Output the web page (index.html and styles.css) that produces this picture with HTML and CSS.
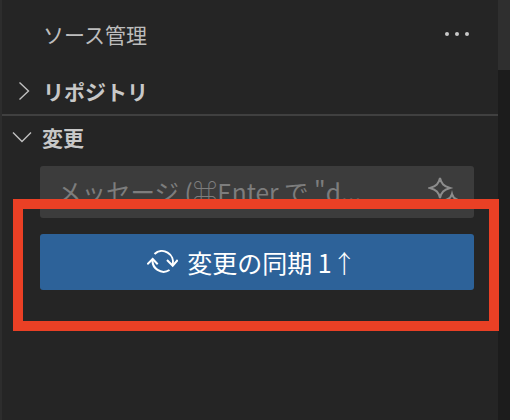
FILE: index.html
```html
<!DOCTYPE html>
<html lang="ja">
<head>
<meta charset="utf-8">
<title>ソース管理</title>
<link rel="stylesheet" href="styles.css">
</head>
<body>
<div class="app">
  <div class="edge"></div>
  <main class="panel">
    <header class="title-row">
      <span class="title">ソース管理</span>
      <svg class="more" width="26" height="6" viewBox="0 0 26 6"><circle cx="3" cy="3" r="2"/><circle cx="13" cy="3" r="2"/><circle cx="23" cy="3" r="2"/></svg>
    </header>
    <section class="section repos">
      <svg class="chev-right" width="12" height="20" viewBox="0 0 12 20"><path d="M1.500 1.500 L10.500 10 L1.500 18.500"/></svg>
      <span class="section-name">リポジトリ</span>
    </section>
    <section class="section changes">
      <svg class="chev-down" width="20" height="12" viewBox="0 0 20 12"><path d="M1 1.500 L10 10.500 L19 1.500"/></svg>
      <span class="section-name">変更</span>
    </section>
    <div class="commit">
      <div class="input">
        <span class="placeholder">メッセージ (⌘Enter で "d...</span>
        <svg class="sparkle" width="30" height="34" viewBox="0 0 30 34"><path d="M12 2 C13.500 8 15.500 10 22 12 C15.500 14 13.500 16 12 22 C10.500 16 8.500 14 2 12 C8.500 10 10.500 8 12 2 Z"/><path d="M24 18 C24.800 21 26 22.500 29 23.500 C26 24.500 24.800 26 24 29 C23.200 26 22 24.500 19 23.500 C22 22.500 23.200 21 24 18 Z"/></svg>
      </div>
      <button class="sync">
        <svg class="sync-icon" width="31" height="26" viewBox="0 0 31 26"><path d="M7.500 5 A11 11 0 0 1 25.700 15.700"/><path d="M5.700 10 A11 11 0 0 0 22.500 21"/><path d="M20 11 L25.700 16.700 L30.700 11"/><path d="M0.300 15.300 L5.700 10 L10.700 15.300"/></svg>
        <span>変更の同期 1<span class="arrow">↑</span></span>
      </button>
    </div>
    <div class="highlight"></div>
  </main>
  <aside class="scrollbar"><div class="thumb"></div></aside>
</div>
</body>
</html>
```
FILE: styles.css
```css
* { box-sizing: border-box; }
html, body { margin: 0; height: 100%; }
body {
  background: #252525;
  font-family: "Noto Sans CJK JP", "Noto Sans", "DejaVu Sans", sans-serif;
  color: #cccccc;
}
.app { display: flex; width: 510px; height: 420px; overflow: hidden; }
.edge { width: 2px; background: #2d2d2d; }
.panel { position: relative; flex: 1; min-width: 0; background: #252525; }
.scrollbar { width: 12px; background: #1c1c1c; }
.thumb { height: 70px; background: #2f2f2f; }
.title-row {
  height: 70px;
  padding: 0 28px 2px 41px;
  display: flex;
  align-items: center;
  justify-content: space-between;
}
.title { font-size: 21px; color: #bdbdbd; }
.more { fill: #c8c8c8; }
.section { display: flex; align-items: center; position: relative; }
.repos { height: 46px; padding: 0 0 2px 16px; gap: 13px; border-bottom: 2px solid #404040; }
.changes { height: 42px; padding-left: 10px; gap: 10px; }
.section-name { font-size: 21px; font-weight: 700; color: #c8c8c8; }
.chev-right path, .chev-down path { fill: none; stroke: #c0c0c0; stroke-width: 1.4; }
.commit { padding: 8px 24px 0 38px; display: flex; flex-direction: column; gap: 16px; }
.input {
  height: 52px;
  background: #3c3c3c;
  border-radius: 3px;
  padding: 8px 16px 0 17px;
  display: flex;
  justify-content: space-between;
  align-items: flex-start;
}
.placeholder { font-size: 24.500px; line-height: 36px; color: #7d7d7d; white-space: nowrap; }
.sparkle { margin-top: 2px; flex: none; fill: none; stroke: #8c8c8c; stroke-width: 2; }
.sync {
  height: 56px;
  background: #2d6299;
  border: 0;
  border-radius: 3px;
  color: #ffffff;
  font: inherit;
  font-size: 25px;
  display: flex;
  align-items: center;
  justify-content: center;
  gap: 9px;
  padding: 0 10px 0 0;
}
.sync-icon { flex: none; fill: none; stroke: #ffffff; stroke-width: 2; }
.arrow { font-weight: 300; }
.highlight {
  position: absolute;
  left: 11px;
  top: 199px;
  width: 486px;
  height: 132px;
  border: 10px solid #ea4025;
}
```
